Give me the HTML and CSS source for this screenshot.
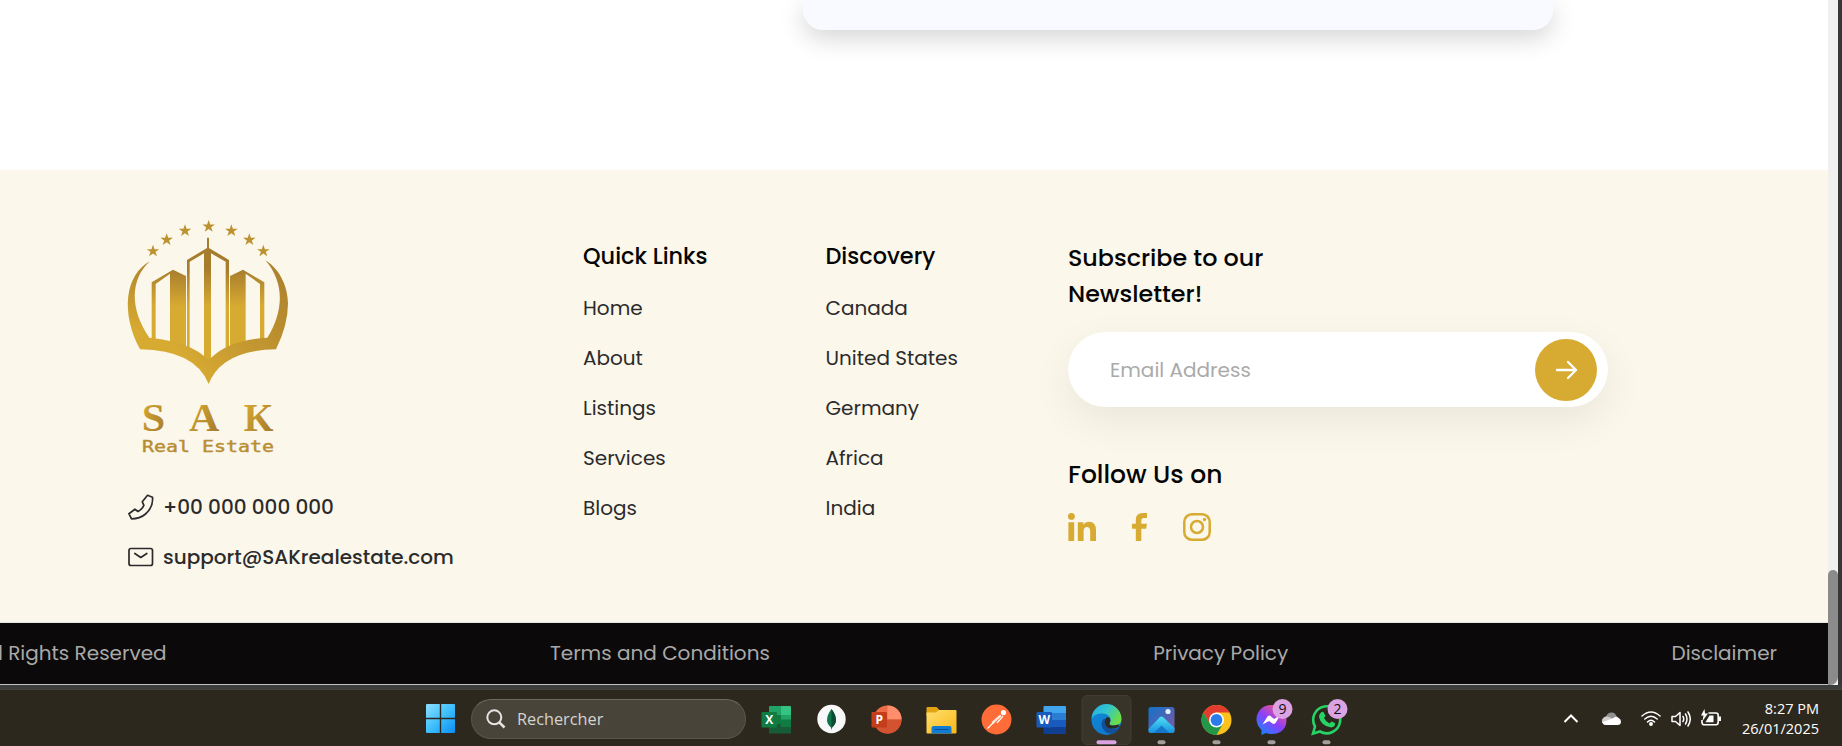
FILE: index.html
```html
<!DOCTYPE html>
<html lang="en">
<head>
<meta charset="utf-8">
<title>SAK Real Estate</title>
<link rel="stylesheet" href="styles.css">
</head>
<body>
<div class="browser">
  <div class="page">
    <section class="content"><div class="card"></div></section>
    <footer class="footer">
      <div class="brand">
        <svg class="logo" viewBox="54 39 480 705">
          <defs>
            <linearGradient id="tower" x1="0" y1="130" x2="0" y2="430" gradientUnits="userSpaceOnUse"><stop offset=".2" stop-color="#a67c2d"/><stop offset=".58" stop-color="#d7aa32"/></linearGradient>
            <linearGradient id="bowl" x1="250" y1="500" x2="560" y2="230" gradientUnits="userSpaceOnUse"><stop offset="0" stop-color="#d7aa32"/><stop offset="1" stop-color="#ab802d"/></linearGradient>
            <linearGradient id="arm" x1="60" y1="430" x2="150" y2="160" gradientUnits="userSpaceOnUse"><stop offset=".2" stop-color="#d7aa32"/><stop offset="1" stop-color="#ab802d"/></linearGradient>
            <linearGradient id="word" x1="0" y1="0" x2="1" y2="1"><stop offset=".1" stop-color="#d7aa32"/><stop offset="1" stop-color="#9f742c"/></linearGradient>
            <path id="star" d="M0-19 4.6-5.6 19-5.6 7.4 2.6 11.8 16 0 7.8-11.8 16-7.4 2.6-19-5.6-4.6-5.6z"/>
          </defs>
          <g fill="#bc9130">
            <use href="#star" x="296" y="64"/><use href="#star" x="225" y="77"/><use href="#star" x="364" y="77"/>
            <use href="#star" x="170" y="104"/><use href="#star" x="418" y="104"/><use href="#star" x="129" y="138"/><use href="#star" x="460" y="138"/>
          </g>
          <g fill="url(#tower)">
            <path d="M125 232 189 194 228 213V430L180 415V206L137 237V410H125z"/>
            <path d="M231 165 291 129V98h6v31l60 36V430H347V170L303 145V470H282V145L239 170V430H231z"/>
            <path d="M360 213 399 194 463 232V410H450V237L407 206V415L360 430z"/>
          </g>
          <path fill="url(#bowl)" d="M118 398Q245 410 296 466 350 405 472 398C520 320 526 235 466 166 515 195 534 255 534 295Q534 360 498 433 335 435 296 537 255 435 90 433z"/>
          <path fill="url(#arm)" d="M90 433C32 325 44 210 120 169 62 220 57 310 118 398L160 420z"/>
          <g font-family="Liberation Serif, serif" font-size="118" font-weight="700" fill="url(#word)">
            <text x="95" y="678" textLength="70" lengthAdjust="spacingAndGlyphs">S</text>
            <text x="237" y="678" textLength="91" lengthAdjust="spacingAndGlyphs">A</text>
            <text x="401" y="678" textLength="89" lengthAdjust="spacingAndGlyphs">K</text>
          </g>
          <text x="96" y="740" font-family="DejaVu Sans Mono, monospace" font-size="47" fill="#b98d30" stroke="#b98d30" stroke-width="1.200" textLength="396" lengthAdjust="spacingAndGlyphs">Real Estate</text>
        </svg>
        <div class="contact">
          <svg width="26" height="26" viewBox="0 0 26 26" fill="none" stroke="#2b2b2b" stroke-width="1.7" stroke-linejoin="round"><path d="M19.500 1.300 24.500 3.200Q25.500 13 17.500 20 12 24.800 3.500 24.800L.9 19.700 6.900 15.200 10 17.500Q14.500 15 15.900 11.300L14.300 7.800z"/></svg>
          <span>+00 000 000 000</span>
        </div>
        <div class="contact">
          <svg width="26" height="26" viewBox="0 0 26 26" fill="none" stroke="#2b2b2b" stroke-width="1.7" stroke-linejoin="round" stroke-linecap="round"><rect x="1" y="4.500" width="23.500" height="17" rx="2"/><path d="M6.800 9.500 12.800 13.500 18.800 9.500"/></svg>
          <span>support@SAKrealestate.com</span>
        </div>
      </div>
      <nav class="links">
        <h3>Quick Links</h3>
        <a>Home</a><a>About</a><a>Listings</a><a>Services</a><a>Blogs</a>
      </nav>
      <nav class="links">
        <h3>Discovery</h3>
        <a>Canada</a><a>United States</a><a>Germany</a><a>Africa</a><a>India</a>
      </nav>
      <div class="news">
        <h2>Subscribe to our<br>Newsletter!</h2>
        <div class="email"><span>Email Address</span>
          <button class="send"><svg width="24" height="24" viewBox="0 0 24 24" fill="none" stroke="#fff" stroke-width="2.300" stroke-linecap="round" stroke-linejoin="round"><path d="M3 12H22M14 4 22 12 14 20"/></svg></button>
        </div>
        <h2 class="follow">Follow Us on</h2>
        <div class="social">
          <svg width="28" height="28" viewBox="0 0 28 28" fill="#d7aa32"><circle cx="3.400" cy="3.400" r="3.400"/><path d="M.4 9.300H6.200V28H.4zM9.800 9.300H15.400V11.800Q17.200 8.800 21 8.800 28 8.800 28 17.500V28H22.200V18.500Q22.200 14 19 14 15.600 14 15.600 18.500V28H9.800z"/></svg>
          <svg width="15" height="28" viewBox=".5 0 15 28" fill="#d7aa32"><path d="M4.300 28V15.700H.3V10.700H4.300V7Q4.300 0 11.200 0H15.500V4.900H12.500Q9.800 4.900 9.800 7.700V10.700H15.400L14.700 15.700H9.800V28z"/></svg>
          <svg width="28" height="28" viewBox="0 0 28 28" fill="none" stroke="#d7aa32" stroke-width="2.500"><rect x="1.300" y="1.300" width="25.400" height="25.400" rx="7.500"/><circle cx="14" cy="14" r="6"/><circle cx="21.500" cy="6.500" r="1.700" fill="#d7aa32" stroke="none"/></svg>
        </div>
      </div>
    </footer>
    <div class="legal"><span>All Rights Reserved</span><span>Terms and Conditions</span><span>Privacy Policy</span><span>Disclaimer</span></div>
  </div>
  <div class="scrollbar"><div class="thumb"></div></div>
</div>
<div class="frame"></div>
<div class="taskbar">
  <svg class="start" width="29" height="29" viewBox="0 0 29 29"><defs><linearGradient id="win" x1="0" y1="0" x2="1" y2="1"><stop stop-color="#8be0ff"/><stop offset=".5" stop-color="#3fc0fb"/><stop offset="1" stop-color="#0a8df5"/></linearGradient></defs><path fill="url(#win)" d="M1 0H13.800V13.800H0V1Q0 0 1 0zM15.200 0H28Q29 0 29 1V13.800H15.200zM0 15.200H13.800V29H1Q0 29 0 28zM15.200 15.200H29V28Q29 29 28 29H15.200z"/></svg>
  <div class="search"><svg width="20" height="20" viewBox="0 0 20 20" fill="none" stroke="#e6e5e3" stroke-width="2"><circle cx="8.300" cy="8.300" r="7"/><path d="M13.300 13.300 18.500 18.500" stroke-width="2.500"/></svg><span>Rechercher</span></div>
  <div class="apps">
    <svg viewBox="0 0 55 56"><path fill="#21a366" d="M20 24V16q0-1 1-1h11v9z"/><path fill="#33c481" d="M32 15h9q1 0 1 1v8H32z"/><path fill="#107c41" d="M20 24h12v10H20z"/><path fill="#21a366" d="M32 24h10v9H32z"/><path fill="#185c37" d="M20 33h22v8.500q0 1-1 1H21q-1 0-1-1z"/><path fill="#107c41" d="M32 28.500h10V36H32z"/><rect x="12.500" y="21" width="15.500" height="15.500" rx="1" fill="#107c41"/><text x="20.300" y="33" class="office">X</text></svg>
    <svg viewBox="0 0 55 56"><circle cx="27.500" cy="28" r="14.200" fill="#f8f8f8"/><path fill="#11744a" d="M27.500 18Q23 24 23 29 23 33 27 36.500L27.300 38.500H27.800L28 36.500Q32 33 32 29 32 24 27.500 18z"/><path fill="#0a4d35" d="M27.500 18Q32 24 32 29 32 33 27.500 37z"/></svg>
    <svg viewBox="0 0 55 56"><circle cx="28.500" cy="28.500" r="14" fill="#ed6c47"/><path fill="#ff8f6b" d="M28.500 14.500a14 14 0 0 1 14 14H28.500z"/><path fill="#d35230" d="M14.500 28.500a14 14 0 0 0 28 0z"/><rect x="12.500" y="21" width="15.500" height="15.500" rx="1" fill="#c43e1c"/><text x="20.300" y="33" class="office">P</text></svg>
    <svg viewBox="0 0 55 56"><defs><linearGradient id="fold" x1="0" y1="0" x2="1" y2="1"><stop stop-color="#ffe070"/><stop offset="1" stop-color="#fbb716"/></linearGradient></defs><path fill="#e2a413" d="M12.500 17q0-1 1-1h9l3 3H41V25H12.500z"/><path fill="url(#fold)" d="M12.500 21.500H22L25 19H41.500q1 0 1 1V41.500q0 1-1 1H13.500q-1 0-1-1z"/><path fill="#0f7cd2" d="M17.500 42.500V37q0-2 2-2h16q2 0 2 2v5.500z"/><path stroke="#0a4f97" d="M20.500 38.500h14"/></svg>
    <svg viewBox="0 0 55 56"><circle cx="27.500" cy="28.500" r="15" fill="#ff6c37"/><circle cx="34.500" cy="21.500" r="2.600" fill="#fff"/><path fill="none" stroke="#ffe5dc" stroke-width="2.800" d="M32 24.500 23.500 32"/><path fill="none" stroke="#fff" stroke-width="1.200" d="M34 25 28 32M24.500 31.500 18.500 37.500"/><path fill="none" stroke="#ff6c37" stroke-width=".6" d="M33.500 25 25 32.500"/></svg>
    <svg viewBox="0 0 55 56"><path fill="#41a5ee" d="M19.500 22V16q0-1 1-1h20.500q1 0 1 1v6z"/><path fill="#2b7cd3" d="M19.500 22h22.500v7H19.500z"/><path fill="#185abd" d="M19.500 29h22.500v7H19.500z"/><path fill="#103f91" d="M19.500 36h22.500v6q0 1-1 1H20.500q-1 0-1-1z"/><rect x="12.500" y="21" width="15.500" height="15.500" rx="1" fill="#185abd"/><text x="20.300" y="33" class="office">W</text></svg>
    <svg viewBox="0 0 55 56"><defs><linearGradient id="e1" x1="0" y1="0" x2="1" y2=".5"><stop stop-color="#27a9e1"/><stop offset=".5" stop-color="#30c5d2"/><stop offset="1" stop-color="#6bdc4a"/></linearGradient><linearGradient id="e2" x1="0" y1="0" x2="1" y2="1"><stop stop-color="#0f8ad8"/><stop offset="1" stop-color="#1173c8"/></linearGradient></defs><rect x="3" y="4.500" width="49" height="49" rx="5" fill="#38342a" stroke="#403c33"/><circle cx="27.500" cy="29" r="15" fill="url(#e2)"/><path fill="url(#e1)" d="M12.500 28A15 15 0 0 1 42.500 28Q42.500 34.500 35 34.500 30.500 34.500 30.500 32 32.500 29.500 31 26.500 28.500 22 21.500 22.500 15 23 12.500 28z"/><path fill="#124f98" d="M24.500 28Q21 33 24 38 27.500 43.500 34 42.500 38.500 41 40.500 36.500 34 39.500 29 37 24.500 34 26.500 28z"/><path fill="#2d2a22" d="M26.500 27.500Q24.500 34 29 37 34 39 40.500 35.500L39 33.500Q36 34.600 33 34.500 30 34 30.500 32.200 32 30 31 27.500 29 25 26.500 27.500z"/><path fill="#38342a" d="M40.500 35.500 44 32V40L40 37z"/><rect x="17.500" y="49.300" width="20" height="4" rx="2" fill="#dba2e4"/></svg>
    <svg viewBox="0 0 55 56"><defs><linearGradient id="ph" x1="0" y1="0" x2="1" y2="1"><stop stop-color="#0f73cb"/><stop offset="1" stop-color="#8656a0"/></linearGradient><linearGradient id="mt" x1="0" y1="0" x2="0" y2="1"><stop stop-color="#4fe0f7"/><stop offset="1" stop-color="#1692dd"/></linearGradient></defs><rect x="14.500" y="16" width="26" height="26" rx="2.500" fill="url(#ph)"/><path fill="#1577c9" d="M19 42 27.500 33.500 36 42z"/><path fill="url(#mt)" d="M14.500 38 26 26Q27.500 25 29 26L40.500 37V40Q40.500 42 38.500 42H35.500L27.500 34.500 19.500 42H16.500Q14.500 42 14.500 40z"/><circle cx="34" cy="20.500" r="2.600" fill="#e4f0fb"/><rect class="dot" x="23.500" y="49.300" width="8" height="4" rx="2"/></svg>
    <svg viewBox="0 0 55 56"><circle cx="27.500" cy="29" r="15" fill="#fcc21b"/><path fill="#e33b2e" d="M14.500 21.500A15 15 0 0 1 40.500 21.500H27.500L21 33z"/><path fill="#23964a" d="M14.500 21.500A15 15 0 0 0 27.500 44L34 32.800 21 32.800z"/><circle cx="27.500" cy="29" r="7.500" fill="#fff"/><circle cx="27.500" cy="29" r="5.900" fill="#2c7bea"/><rect class="dot" x="23.500" y="49.300" width="8" height="4" rx="2"/></svg>
    <svg viewBox="0 0 55 56"><defs><linearGradient id="ms" x1=".1" y1="1" x2=".8" y2="0"><stop stop-color="#0a8cff"/><stop offset=".5" stop-color="#8a3ffb"/><stop offset="1" stop-color="#ff5a78"/></linearGradient></defs><path fill="url(#ms)" d="M27.500 14C19 14 12.500 20 12.500 28.500Q12.500 34 17.500 39V44L22 42Q24.500 43 27.500 43 42.500 42.500 42.500 28.500 42 14 27.500 14z"/><path fill="#fff" d="M18.500 33.500 23.500 25.500Q25 24 26.500 25L30 28 36.500 24 31.500 32Q30 33.500 28.500 32.500L25 30z"/><circle cx="38.500" cy="18" r="10" fill="#dba2e4"/><text x="38.500" y="23" class="badge">9</text><rect class="dot" x="23.500" y="49.300" width="8" height="4" rx="2"/></svg>
    <svg viewBox="0 0 55 56"><path fill="#2d281d" stroke="#25d366" stroke-width="2.600" d="M14 42.500 16 35.500A13.500 13.500 0 1 1 21 40.500z"/><path fill="#25d366" d="M22 21.500Q24 20 25 22L26.500 25 25 27Q27 31 30.500 32.500L32.500 30.500 36 32Q36.500 36 32 36.500 22 35 20 26 20 23 22 21.500z"/><circle cx="38.500" cy="18" r="10" fill="#dba2e4"/><text x="38.500" y="23" class="badge">2</text><rect class="dot" x="23.500" y="49.300" width="8" height="4" rx="2"/></svg>
  </div>
  <div class="tray">
    <svg width="16" height="20" viewBox="0 0 16 20" fill="none" stroke="#fff" stroke-width="2"><path d="M1.500 13 8 6.500 14.500 13"/></svg>
    <svg width="20" height="20" viewBox="0 0 20 20"><path fill="#919090" d="M1 13Q1 8 5 7.500 7 3 11 3.500 14 3.500 15.500 7L19 11 12 14z"/><path fill="#d0cfce" d="M1 14Q0 9 5 7.500 8 7 12 10L8 15z"/><path fill="#fff" d="M4 16Q1 15 2 13L12.500 9Q14.500 7 17 8.500 20 10 20 12.500 20 16 16.500 16z"/></svg>
    <svg width="20" height="20" viewBox="0 0 20 20" fill="none" stroke="#fff" stroke-width="1.500" stroke-linecap="round"><path d="M1 7Q10-1 19 7M3.800 10Q10 4.500 16.200 10M6.500 13Q10 9.500 13.500 13"/><circle cx="10" cy="15" r="1.200" fill="#fff"/></svg>
    <svg width="20" height="20" viewBox="0 0 20 20" fill="none" stroke="#fff" stroke-width="1.500" stroke-linejoin="round" stroke-linecap="round"><path d="M1 7.500H4.500L9 3.500V16.500L4.500 12.500H1zM12 7.500Q13.500 10 12 12.500M14.500 5Q17.500 10 14.500 15M17 3Q21.500 10 17 17"/></svg>
    <svg width="20" height="20" viewBox="0 0 20 20" fill="none" stroke="#fff" stroke-width="1.600"><path d="M7.500 4H15Q17.200 4 17.200 6.500V13Q17.200 15.800 15 15.800H3.500Q1 15.800 1 13.500V11"/><path fill="#fff" stroke="none" d="M8.500 6.500H12.500V13.200H4.500zM18 7.500H20V12H18zM3.500 0 0 6.500H2.500L1.500 12 7 4.500H4z"/></svg>
  </div>
  <div class="clock"><span>8:27 PM</span><span>26/01/2025</span></div>
</div>
</body>
</html>
```
FILE: styles.css
```css
* { box-sizing: border-box; }
body { margin: 0; width: 1842px; height: 746px; overflow: hidden; background: #373737; font-family: Poppins, Inter, sans-serif; }
.browser { display: flex; height: 685px; }
.page { width: 1828px; overflow: hidden; background: #fff; }
.content { height: 170px; padding-left: 803px; }
.card { width: 750px; height: 30px; border-radius: 0 0 20px 20px; background: #f9faff; box-shadow: 0 8px 24px rgba(0, 0, 0, .17); }
.footer { display: grid; grid-template-columns: 455px 242.500px 242.500px 540px; height: 452px; padding: 48px 0 0 128px; background: #fbf7eb; }
.logo { display: block; width: 160px; height: 235px; margin-bottom: 29px; overflow: visible; }
.contact { display: flex; align-items: center; gap: 9px; height: 50px; font-size: 20px; font-weight: 500; color: #2b2b2b; }
.links { display: flex; flex-direction: column; padding-top: 20px; }
.links h3 { margin: 0 0 9px; font-size: 22.400px; line-height: 36px; font-weight: 500; color: #050505; }
.links a { font-size: 20px; line-height: 50px; color: #2b2b2b; }
.news { padding-top: 22px; }
.news h2 { margin: 0; font-size: 23.800px; line-height: 36px; font-weight: 500; color: #050505; }
.news .follow { font-size: 25px; }
.email { display: flex; align-items: center; justify-content: space-between; width: 540px; height: 75px; margin: 20px 0 50px; padding: 0 11px 0 42px; border-radius: 38px; background: #fff; color: #aaa; font-size: 20px; box-shadow: 0 14px 40px rgba(0, 0, 0, .07); }
.send { display: grid; place-items: center; width: 62px; height: 62px; padding: 0; border: 0; border-radius: 50%; background: #d7aa32; }
.social { display: flex; gap: 36px; margin-top: 20px; }
.legal { display: flex; justify-content: flex-end; align-items: center; gap: 383.300px; height: 63px; padding: 0 51px 2px 0; border-top: 1px solid #e7e5e1; border-bottom: 1px solid #bfc1c1; background: #0b090a; color: #a9a9a9; font-size: 20px; white-space: nowrap; }
.scrollbar { width: 10px; padding-top: 570px; background: #f0f0f0; }
.thumb { height: 115px; border-radius: 5px 5px 8px 0; background: #8b8b8b; }
.frame { height: 4px; background: #3b3c3c; }
.taskbar { display: flex; align-items: center; height: 57px; padding: 1px 23px 0 426px; border-top: 1px solid #494337; background: #2d281d; color: #fff; font-family: "Segoe UI", "Open Sans", sans-serif; }
.start { flex: none; margin-right: 16px; }
.search { display: flex; align-items: center; gap: 11px; width: 275px; height: 40px; margin-right: 3px; padding-left: 14px; border: 1px solid #59554c; border-top-color: #6e695f; border-radius: 20px; background: #48443a; color: #d5d3d0; font-size: 16.300px; }
.apps { display: flex; }
.apps svg { width: 55px; height: 56px; }
.office { font: 700 12px "Open Sans", sans-serif; fill: #fff; text-anchor: middle; }
.badge { font: 14px "Open Sans", sans-serif; fill: #111; text-anchor: middle; }
.dot { fill: #a19f9c; }
.tray { display: flex; align-items: center; gap: 10px; margin-left: auto; }
.tray svg:first-child { margin-right: 12px; }
.tray svg:nth-child(2) { margin-right: 10px; }
.clock { display: flex; flex-direction: column; align-items: flex-end; width: 98px; font-size: 14.500px; line-height: 20px; }
```
